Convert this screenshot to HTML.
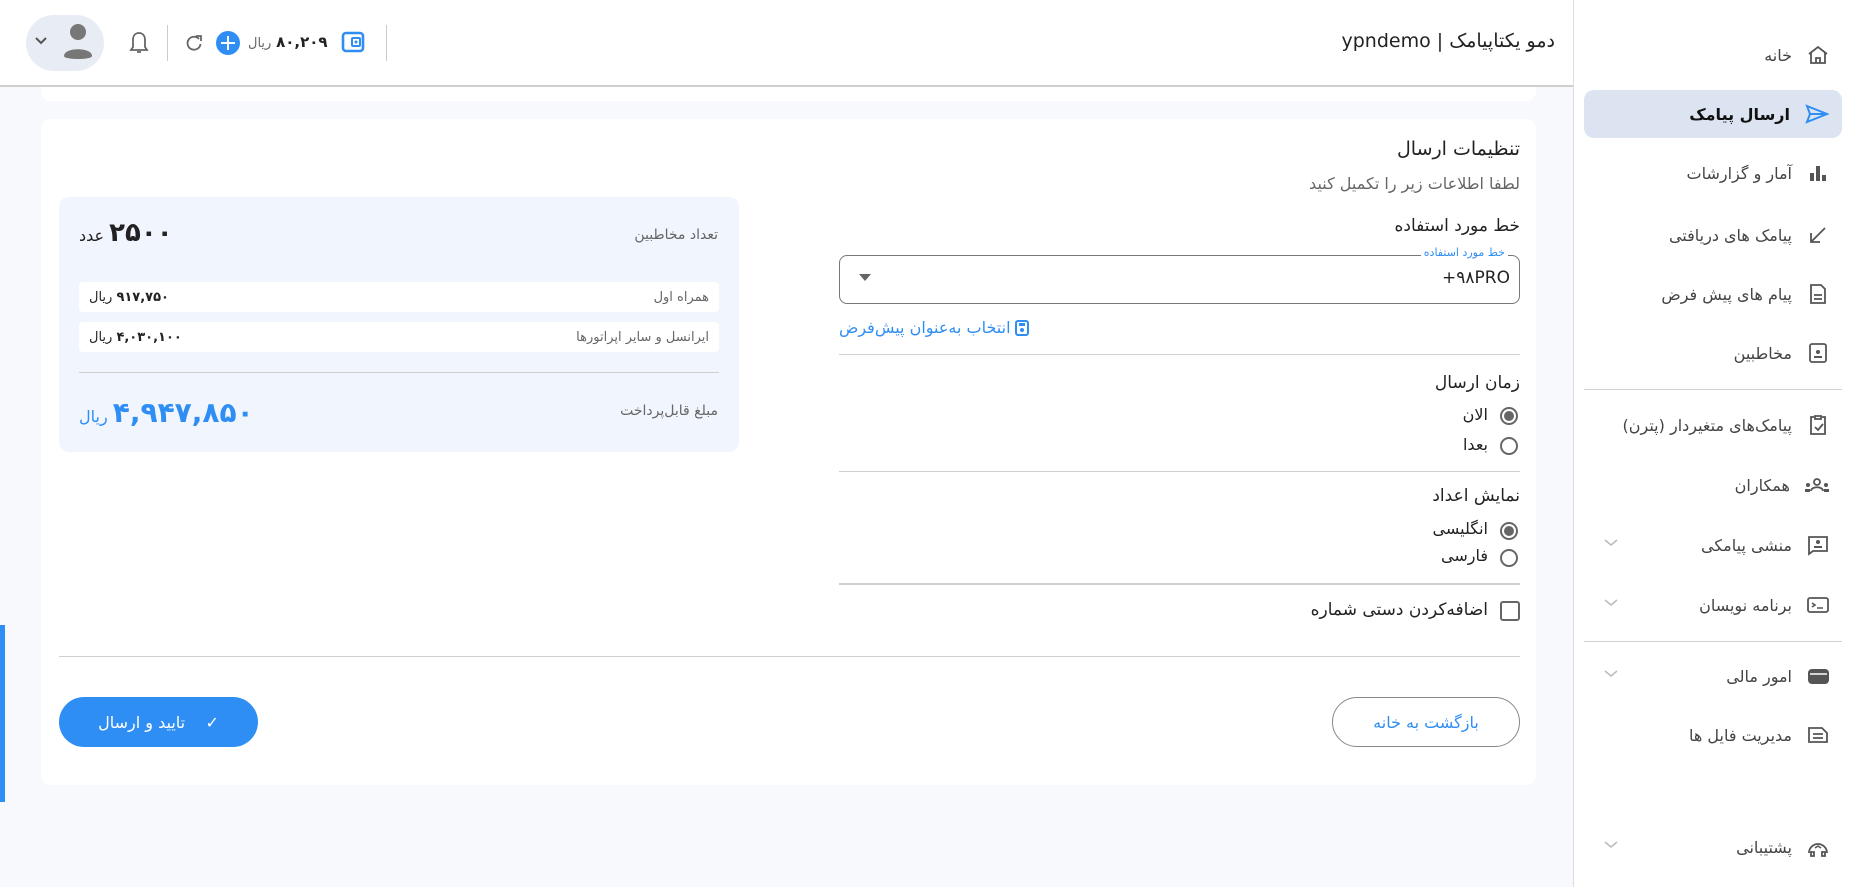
<!DOCTYPE html>
<html><head><meta charset="utf-8">
<style>
*{box-sizing:border-box;margin:0;padding:0}
body{width:1850px;height:887px;position:relative;overflow:hidden;background:#f8f9fd;font-family:"DejaVu Sans","Noto Sans CJK SC",sans-serif;color:#222}
.a{position:absolute}
.r{direction:rtl;white-space:nowrap}
.hdr{left:0;top:0;width:1573px;height:87px;background:#fff;border-bottom:2px solid #cfcfcf}
.side{left:1573px;top:0;width:277px;height:887px;background:#fff;border-left:1px solid #ddd}
.si{position:absolute;right:20px;width:240px;height:40px;direction:rtl;font-size:16px;color:#444;display:flex;align-items:center}
.si svg{margin-left:14px;flex:none}
.chev{position:absolute;left:0;top:13px}
.hr{position:absolute;height:1px;background:#d0d0d0}
.radio{position:absolute;width:18px;height:18px;border:2px solid #666;border-radius:50%}
.radio.on::after{content:"";position:absolute;left:2px;top:2px;width:10px;height:10px;border-radius:50%;background:#666}
.lbl{font-size:16px;color:#222}
.row{position:absolute;left:79px;width:640px;height:30px;background:#fff;border-radius:4px;display:flex;justify-content:space-between;align-items:center;padding:0 10px;direction:rtl;font-size:13px}
</style></head><body>
<div class="a hdr"></div>
<div class="a" style="left:41px;top:87px;width:1495px;height:14px;background:#fff;border-radius:0 0 10px 10px"></div>
<!-- header -->
<div class="a" style="left:26px;top:15px;width:78px;height:56px;border-radius:28px;background:#e8ecf4"></div>
<svg class="a" style="left:34px;top:36px" width="14" height="10"><path d="M2 2l5 5 5-5" stroke="#555" stroke-width="2" fill="none"/></svg>
<svg class="a" style="left:60px;top:20px" width="36" height="44"><circle cx="18" cy="12" r="8" fill="#777"/><path d="M4 36c0-9 28-9 28 0c0 4-28 4-28 0z" fill="#777"/></svg>
<svg class="a" style="left:128px;top:30px" width="22" height="26"><path d="M11 3c-4 0-6 3-6 7v7l-2 3h16l-2-3v-7c0-4-2-7-6-7z M9 22h4" stroke="#666" stroke-width="1.8" fill="none"/></svg>
<div class="a" style="left:167px;top:25px;width:1px;height:36px;background:#ccc"></div>
<svg class="a" style="left:184px;top:33px" width="20" height="20"><path d="M15 6a6.5 6.5 0 1 0 1.5 5" stroke="#666" stroke-width="1.8" fill="none"/><path d="M12 3h5v5" stroke="#666" stroke-width="1.8" fill="none"/></svg>
<div class="a" style="left:216px;top:31px;width:24px;height:24px;border-radius:50%;background:#2f8ef4"></div>
<div class="a" style="left:221px;top:42px;width:14px;height:2.4px;background:#fff"></div>
<div class="a" style="left:227px;top:36px;width:2.4px;height:14px;background:#fff"></div>
<div class="a r" style="left:248px;top:33px;font-size:15px"><b>۸۰,۲۰۹</b> <span style="color:#666;font-size:13px">ریال</span></div>
<svg class="a" style="left:341px;top:30px" width="24" height="24"><rect x="2" y="3" width="20" height="18" rx="3" stroke="#2f8ef4" stroke-width="2.6" fill="none"/><rect x="11" y="8" width="8" height="8" rx="1" stroke="#2f8ef4" stroke-width="2" fill="#fff"/><circle cx="15" cy="12" r="1.5" fill="#2f8ef4"/></svg>
<div class="a" style="left:386px;top:25px;width:1px;height:36px;background:#ccc"></div>
<div class="a r" style="right:295px;top:30px;font-size:19px;color:#222">دمو یکتاپیامک | ypndemo</div>
<!-- sidebar -->
<div class="a side"></div>
<div class="a" style="left:1584px;top:90px;width:258px;height:48px;border-radius:10px;background:#dce3f1"></div>
<div class="si" style="top:35px;right:20px"><svg width="24" height="24"><path d="M3 11l9-7 9 7M5 10v10h14V10M10 20v-5h4v5" stroke="#555" stroke-width="1.8" fill="none"/></svg>خانه</div>
<div class="si" style="top:94px;color:#111;font-weight:bold"><svg width="26" height="24"><path d="M3 4l20 8-20 8 3-8zM6 12h17" stroke="#2f8ef4" stroke-width="2" fill="none"/></svg>ارسال پیامک</div>
<div class="si" style="top:153px"><svg width="24" height="24"><rect x="4" y="12" width="4" height="8" fill="#555"/><rect x="10" y="5" width="4" height="15" fill="#555"/><rect x="16" y="14" width="4" height="6" fill="#555"/></svg>آمار و گزارشات</div>
<div class="si" style="top:215px"><svg width="24" height="24"><path d="M19 5L5 19M5 10v9h9" stroke="#555" stroke-width="1.8" fill="none"/></svg>پیامک های دریافتی</div>
<div class="si" style="top:274px"><svg width="24" height="24"><path d="M5 3h10l4 4v14H5z M8 13h8M8 17h8" stroke="#555" stroke-width="1.8" fill="none"/></svg>پیام های پیش فرض</div>
<div class="si" style="top:333px"><svg width="24" height="24"><rect x="4" y="3" width="16" height="18" rx="2" stroke="#555" stroke-width="1.8" fill="none"/><circle cx="12" cy="11" r="2" fill="#555"/><path d="M8 16h8" stroke="#555" stroke-width="2"/></svg>مخاطبین</div>
<div class="hr" style="left:1584px;top:389px;width:258px"></div>
<div class="si" style="top:405px"><svg width="24" height="24"><path d="M8 4H5v17h14V4h-3M9 3h6v3H9z M9 14l3 3 5-6" stroke="#555" stroke-width="1.8" fill="none"/></svg>پیامک‌های متغیردار (پترن)</div>
<div class="si" style="top:465px"><svg width="26" height="24"><circle cx="13" cy="9" r="3" stroke="#555" stroke-width="1.8" fill="none"/><path d="M7 18c0-5 12-5 12 0" stroke="#555" stroke-width="1.8" fill="none"/><circle cx="4" cy="12" r="2" fill="#555"/><circle cx="22" cy="12" r="2" fill="#555"/><rect x="1" y="16" width="5" height="3" fill="#555"/><rect x="20" y="16" width="5" height="3" fill="#555"/></svg>همکاران</div>
<div class="si" style="top:525px"><svg width="24" height="24"><path d="M3 4h18v14H7l-4 3z" stroke="#555" stroke-width="1.8" fill="none"/><circle cx="12" cy="9" r="2" fill="#555"/><path d="M8 14h8" stroke="#555" stroke-width="2"/></svg>منشی پیامکی<svg class="chev" width="14" height="10"><path d="M1 2l6 5 6-5" stroke="#bbb" stroke-width="1.5" fill="none"/></svg></div>
<div class="si" style="top:585px"><svg width="24" height="24"><rect x="2" y="5" width="20" height="14" rx="2" stroke="#555" stroke-width="1.8" fill="none"/><path d="M6 10l3 2-3 2M11 15h6" stroke="#555" stroke-width="1.6" fill="none"/></svg>برنامه نویسان<svg class="chev" width="14" height="10"><path d="M1 2l6 5 6-5" stroke="#bbb" stroke-width="1.5" fill="none"/></svg></div>
<div class="hr" style="left:1584px;top:641px;width:258px"></div>
<div class="si" style="top:656px"><svg width="24" height="24"><rect x="2" y="5" width="21" height="15" rx="4" fill="#555"/><path d="M4 10h17" stroke="#fff" stroke-width="1.5"/></svg>امور مالی<svg class="chev" width="14" height="10"><path d="M1 2l6 5 6-5" stroke="#bbb" stroke-width="1.5" fill="none"/></svg></div>
<div class="si" style="top:715px"><svg width="24" height="24"><path d="M3 5h13l5 5v9H3z M7 11h10M7 15h10" stroke="#555" stroke-width="1.8" fill="none"/></svg>مدیریت فایل ها</div>
<div class="si" style="top:827px"><svg width="24" height="24"><path d="M3 18a9 9 0 0 1 18 0M5 17h3v4H5zM16 17h3v4h-3z" stroke="#555" stroke-width="1.8" fill="none"/><path d="M9 13l3-2 3 2" stroke="#555" stroke-width="1.5" fill="none"/></svg>پشتیبانی<svg class="chev" width="14" height="10"><path d="M1 2l6 5 6-5" stroke="#bbb" stroke-width="1.5" fill="none"/></svg></div>
<!-- left blue bar -->
<div class="a" style="left:0;top:625px;width:5px;height:177px;background:#2f8ef4"></div>
<!-- main card -->
<div class="a" style="left:41px;top:119px;width:1495px;height:666px;background:#fff;border-radius:10px"></div>
<div class="a r" style="right:330px;top:138px;font-size:19px">تنظیمات ارسال</div>
<div class="a r" style="right:330px;top:174px;font-size:16px;color:#666">لطفا اطلاعات زیر را تکمیل کنید</div>
<div class="a r" style="right:330px;top:216px;font-size:17px">خط مورد استفاده</div>
<div class="a" style="left:839px;top:255px;width:681px;height:49px;border:1.5px solid #777;border-radius:8px"></div>
<div class="a r" style="right:342px;top:246px;font-size:11px;color:#2f8ef4;background:#fff;padding:0 3px">خط مورد استفاده</div>
<div class="a" style="right:340px;top:268px;font-size:17px">+۹۸PRO</div>
<svg class="a" style="left:859px;top:274px" width="12" height="8"><path d="M0 0h12L6 7z" fill="#666"/></svg>
<div class="a r" style="left:839px;top:318px;font-size:16px;color:#2f8ef4;display:flex;align-items:center"><svg style="margin-left:4px" width="14" height="16"><rect x="1" y="1" width="12" height="14" rx="2" stroke="#2f8ef4" stroke-width="2" fill="none"/><rect x="4" y="3" width="6" height="3" fill="#2f8ef4"/><circle cx="7" cy="10" r="2" fill="#2f8ef4"/></svg>انتخاب به‌عنوان پیش‌فرض</div>
<div class="hr" style="left:839px;top:354px;width:681px"></div>
<div class="a r" style="right:330px;top:373px;font-size:17px">زمان ارسال</div>
<div class="a radio on" style="left:1500px;top:407px"></div>
<div class="a r lbl" style="right:362px;top:405px">الان</div>
<div class="a radio" style="left:1500px;top:437px"></div>
<div class="a r lbl" style="right:362px;top:435px">بعدا</div>
<div class="hr" style="left:839px;top:471px;width:681px"></div>
<div class="a r" style="right:330px;top:486px;font-size:17px">نمایش اعداد</div>
<div class="a radio on" style="left:1500px;top:522px"></div>
<div class="a r lbl" style="right:362px;top:519px">انگلیسی</div>
<div class="a radio" style="left:1500px;top:549px"></div>
<div class="a r lbl" style="right:362px;top:546px">فارسی</div>
<div class="hr" style="left:839px;top:583px;width:681px;height:2px"></div>
<div class="a" style="left:1500px;top:601px;width:20px;height:20px;border:2px solid #666;border-radius:3px"></div>
<div class="a r" style="right:362px;top:600px;font-size:17px">اضافه‌کردن دستی شماره</div>
<div class="hr" style="left:59px;top:656px;width:1461px"></div>
<div class="a r" style="left:59px;top:697px;width:199px;height:50px;border-radius:25px;background:#2f8ef4;color:#fff;font-size:16px;display:flex;align-items:center;justify-content:center">✓&nbsp;&nbsp;&nbsp;&nbsp;تایید و ارسال</div>
<div class="a r" style="left:1332px;top:697px;width:188px;height:50px;border-radius:25px;border:1px solid #888;color:#2f8ef4;font-size:16px;display:flex;align-items:center;justify-content:center">بازگشت به خانه</div>
<!-- summary -->
<div class="a" style="left:59px;top:197px;width:680px;height:255px;background:#f1f5fd;border-radius:10px"></div>
<div class="a r" style="right:1132px;top:227px;font-size:14px;color:#666">تعداد مخاطبین</div>
<div class="a r" style="left:79px;top:218px;font-size:16px"><b style="font-size:26px">۲۵۰۰</b> عدد</div>
<div class="row" style="top:282px"><span style="color:#666">همراه اول</span><span><b>۹۱۷,۷۵۰</b> ریال</span></div>
<div class="row" style="top:322px"><span style="color:#666">ایرانسل و سایر اپراتورها</span><span><b>۴,۰۳۰,۱۰۰</b> ریال</span></div>
<div class="hr" style="left:79px;top:372px;width:640px"></div>
<div class="a r" style="right:1132px;top:403px;font-size:14px;color:#666">مبلغ قابل‌پرداخت</div>
<div class="a r" style="left:79px;top:396px;font-size:16px;color:#2f8ef4"><b style="font-size:28px">۴,۹۴۷,۸۵۰</b> ریال</div>
</body></html>
